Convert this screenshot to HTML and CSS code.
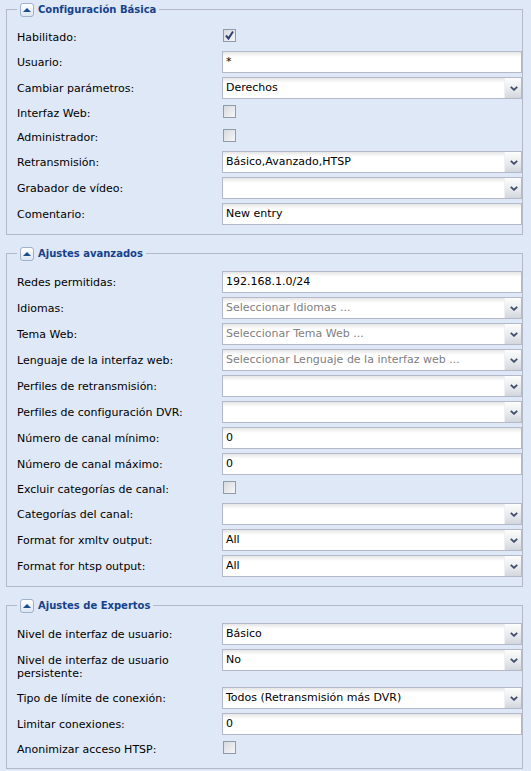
FILE: index.html
```html
<!DOCTYPE html>
<html lang="es">
<head>
<meta charset="utf-8">
<title>Configuración</title>
<link rel="stylesheet" href="styles.css">
</head>
<body>
<div class="page">

<fieldset class="fs">
  <legend class="lg"><span class="tg"><svg width="8" height="5" viewBox="0 0 8 5"><polygon points="0,5 4,1 8,5" fill="#1d4a8c"/></svg></span><span class="lt">Configuración Básica</span></legend>
  <div class="row cbrow"><span class="lb">Habilitado:</span><span class="chk"><svg width="11" height="11" viewBox="0 0 11 11"><path d="M2 5.5 L4.5 8.5 L9 1.5" fill="none" stroke="#2f3f6e" stroke-width="2"/></svg></span></div>
  <div class="row"><span class="lb">Usuario:</span><div class="tf">*</div></div>
  <div class="row"><span class="lb">Cambiar parámetros:</span><div class="cmb"><span class="val">Derechos</span><span class="trig"><svg width="8" height="5" viewBox="0 0 8 5"><path d="M0.8 0.8 L4 3.8 L7.2 0.8" fill="none" stroke="#3d4a66" stroke-width="1.8"/></svg></span></div></div>
  <div class="row cbrow"><span class="lb">Interfaz Web:</span><span class="chk"></span></div>
  <div class="row cbrow"><span class="lb">Administrador:</span><span class="chk"></span></div>
  <div class="row"><span class="lb">Retransmisión:</span><div class="cmb"><span class="val">Básico,Avanzado,HTSP</span><span class="trig"><svg width="8" height="5" viewBox="0 0 8 5"><path d="M0.8 0.8 L4 3.8 L7.2 0.8" fill="none" stroke="#3d4a66" stroke-width="1.8"/></svg></span></div></div>
  <div class="row"><span class="lb">Grabador de vídeo:</span><div class="cmb"><span class="val"></span><span class="trig"><svg width="8" height="5" viewBox="0 0 8 5"><path d="M0.8 0.8 L4 3.8 L7.2 0.8" fill="none" stroke="#3d4a66" stroke-width="1.8"/></svg></span></div></div>
  <div class="row"><span class="lb">Comentario:</span><div class="tf">New entry</div></div>
</fieldset>

<fieldset class="fs">
  <legend class="lg"><span class="tg"><svg width="8" height="5" viewBox="0 0 8 5"><polygon points="0,5 4,1 8,5" fill="#1d4a8c"/></svg></span><span class="lt">Ajustes avanzados</span></legend>
  <div class="row"><span class="lb">Redes permitidas:</span><div class="tf">192.168.1.0/24</div></div>
  <div class="row"><span class="lb">Idiomas:</span><div class="cmb"><span class="val ph">Seleccionar Idiomas ...</span><span class="trig"><svg width="8" height="5" viewBox="0 0 8 5"><path d="M0.8 0.8 L4 3.8 L7.2 0.8" fill="none" stroke="#3d4a66" stroke-width="1.8"/></svg></span></div></div>
  <div class="row"><span class="lb">Tema Web:</span><div class="cmb"><span class="val ph">Seleccionar Tema Web ...</span><span class="trig"><svg width="8" height="5" viewBox="0 0 8 5"><path d="M0.8 0.8 L4 3.8 L7.2 0.8" fill="none" stroke="#3d4a66" stroke-width="1.8"/></svg></span></div></div>
  <div class="row"><span class="lb">Lenguaje de la interfaz web:</span><div class="cmb"><span class="val ph">Seleccionar Lenguaje de la interfaz web ...</span><span class="trig"><svg width="8" height="5" viewBox="0 0 8 5"><path d="M0.8 0.8 L4 3.8 L7.2 0.8" fill="none" stroke="#3d4a66" stroke-width="1.8"/></svg></span></div></div>
  <div class="row"><span class="lb">Perfiles de retransmisión:</span><div class="cmb"><span class="val"></span><span class="trig"><svg width="8" height="5" viewBox="0 0 8 5"><path d="M0.8 0.8 L4 3.8 L7.2 0.8" fill="none" stroke="#3d4a66" stroke-width="1.8"/></svg></span></div></div>
  <div class="row"><span class="lb">Perfiles de configuración DVR:</span><div class="cmb"><span class="val"></span><span class="trig"><svg width="8" height="5" viewBox="0 0 8 5"><path d="M0.8 0.8 L4 3.8 L7.2 0.8" fill="none" stroke="#3d4a66" stroke-width="1.8"/></svg></span></div></div>
  <div class="row"><span class="lb">Número de canal mínimo:</span><div class="tf">0</div></div>
  <div class="row"><span class="lb">Número de canal máximo:</span><div class="tf">0</div></div>
  <div class="row cbrow"><span class="lb">Excluir categorías de canal:</span><span class="chk"></span></div>
  <div class="row"><span class="lb">Categorías del canal:</span><div class="cmb"><span class="val"></span><span class="trig"><svg width="8" height="5" viewBox="0 0 8 5"><path d="M0.8 0.8 L4 3.8 L7.2 0.8" fill="none" stroke="#3d4a66" stroke-width="1.8"/></svg></span></div></div>
  <div class="row"><span class="lb">Format for xmltv output:</span><div class="cmb"><span class="val">All</span><span class="trig"><svg width="8" height="5" viewBox="0 0 8 5"><path d="M0.8 0.8 L4 3.8 L7.2 0.8" fill="none" stroke="#3d4a66" stroke-width="1.8"/></svg></span></div></div>
  <div class="row"><span class="lb">Format for htsp output:</span><div class="cmb"><span class="val">All</span><span class="trig"><svg width="8" height="5" viewBox="0 0 8 5"><path d="M0.8 0.8 L4 3.8 L7.2 0.8" fill="none" stroke="#3d4a66" stroke-width="1.8"/></svg></span></div></div>
</fieldset>

<fieldset class="fs">
  <legend class="lg"><span class="tg"><svg width="8" height="5" viewBox="0 0 8 5"><polygon points="0,5 4,1 8,5" fill="#1d4a8c"/></svg></span><span class="lt">Ajustes de Expertos</span></legend>
  <div class="row"><span class="lb">Nivel de interfaz de usuario:</span><div class="cmb"><span class="val">Básico</span><span class="trig"><svg width="8" height="5" viewBox="0 0 8 5"><path d="M0.8 0.8 L4 3.8 L7.2 0.8" fill="none" stroke="#3d4a66" stroke-width="1.8"/></svg></span></div></div>
  <div class="row"><span class="lb">Nivel de interfaz de usuario persistente:</span><div class="cmb"><span class="val">No</span><span class="trig"><svg width="8" height="5" viewBox="0 0 8 5"><path d="M0.8 0.8 L4 3.8 L7.2 0.8" fill="none" stroke="#3d4a66" stroke-width="1.8"/></svg></span></div></div>
  <div class="row"><span class="lb">Tipo de límite de conexión:</span><div class="cmb"><span class="val">Todos (Retransmisión más DVR)</span><span class="trig"><svg width="8" height="5" viewBox="0 0 8 5"><path d="M0.8 0.8 L4 3.8 L7.2 0.8" fill="none" stroke="#3d4a66" stroke-width="1.8"/></svg></span></div></div>
  <div class="row"><span class="lb">Limitar conexiones:</span><div class="tf">0</div></div>
  <div class="row cbrow"><span class="lb">Anonimizar acceso HTSP:</span><span class="chk"></span></div>
</fieldset>

</div>
</body>
</html>
```

FILE: styles.css
```css
* { box-sizing: border-box; }

html, body {
  margin: 0;
  padding: 0;
  background: #dfe8f6;
}

body {
  font-family: "DejaVu Sans", "Liberation Sans", sans-serif;
  font-size: 11px;
  color: #000;
}

.page {
  width: 531px;
  padding: 0 8px 0 6px;
}

.fs {
  margin: 0 0 9px 0;
  padding: 8px 0 5px 10px;
  border: 1px solid #b5b8c8;
  min-width: 0;
}

.lg {
  display: flex;
  align-items: center;
  height: 19px;
  margin: 0;
  padding: 0 3px 0 3px;
}

.tg {
  width: 14px;
  height: 14px;
  border: 1px solid #9fb0c9;
  border-radius: 3px;
  background: linear-gradient(#ffffff, #dce5f2);
  display: flex;
  align-items: center;
  justify-content: center;
}

.tg svg { display: block; margin-top: -1px; }

.lt {
  margin-left: 4px;
  font-weight: bold;
  font-size: 10px;
  color: #15428b;
}

.row {
  display: flex;
  align-items: flex-start;
  margin-bottom: 4px;
}

.cbrow { height: 20px; }

.lb {
  flex: none;
  width: 205px;
  padding: 5px 0 3px 0;
  line-height: 13px;
}

.cbrow .lb { padding-top: 4px; }

.tf, .cmb {
  width: 300px;
  height: 22px;
  border: 1px solid #b5b8c8;
  background: linear-gradient(#e6e6e6, #ffffff 5px, #ffffff);
  line-height: 20px;
  white-space: nowrap;
  overflow: hidden;
}

.tf { padding: 0 3px; }

.cmb { display: flex; }

.val {
  flex: 1;
  padding: 0 3px;
  overflow: hidden;
}

.ph { color: #808080; }

.trig {
  flex: none;
  width: 17px;
  height: 20px;
  background: linear-gradient(#fdfdfd, #eceef1 45%, #d3d7dd);
  border-left: 1px solid #eef0f3;
  display: flex;
  align-items: center;
  justify-content: center;
}

.trig svg { display: block; margin-left: 1px; }

.chk {
  width: 13px;
  height: 13px;
  margin: 2px 0 0 1px;
  border: 1px solid #8f9aab;
  background: linear-gradient(135deg, #d6d9de, #f6f7f8);
  display: flex;
  align-items: center;
  justify-content: center;
}

.chk svg { display: block; }
```
